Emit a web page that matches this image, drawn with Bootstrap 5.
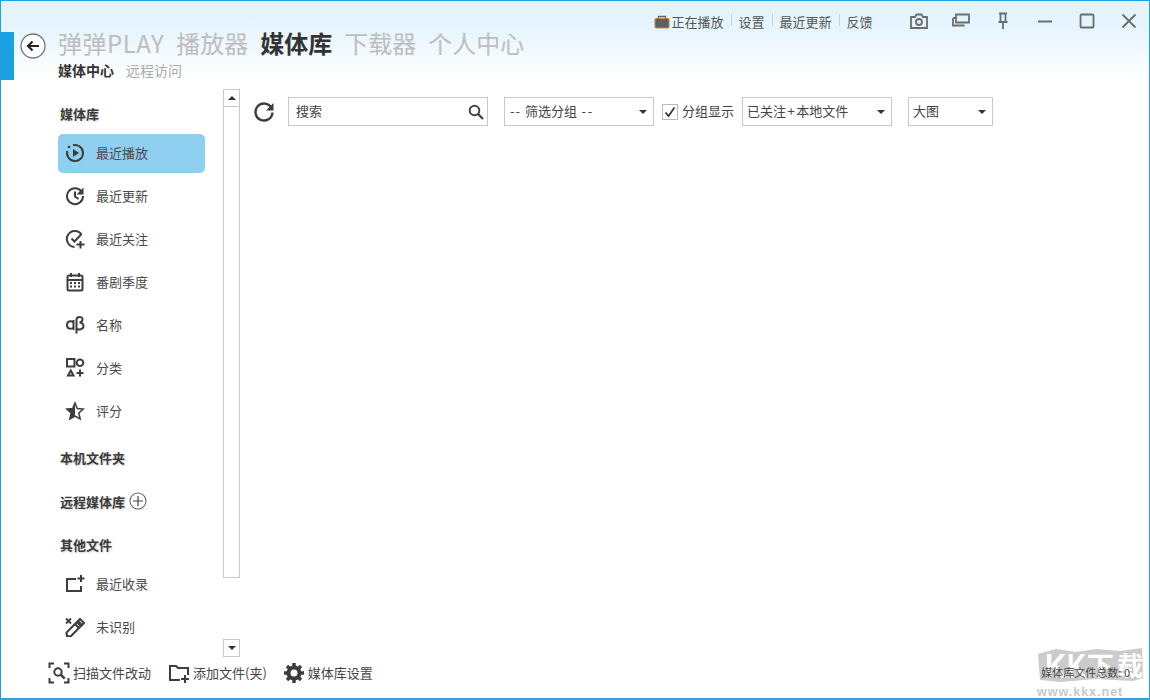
<!DOCTYPE html>
<html lang="zh">
<head>
<meta charset="utf-8">
<title>媒体库</title>
<link href="https://cdn.jsdelivr.net/npm/bootstrap@5.3.0/dist/css/bootstrap.min.css" rel="stylesheet">
<style>
html,body{height:100%;margin:0;overflow:hidden;background:#fff}
body{font-family:"Noto Sans CJK SC","Liberation Sans",sans-serif;font-size:13px;color:#444}
.app-win{position:relative;width:1150px;height:700px;border:1px solid #1ba1e2;border-bottom-width:2px;border-bottom-color:#3b9bd4;background:#fff;overflow:hidden}
.app-head{height:79px;background:linear-gradient(#e1f3fd 0,#e7f5fd 30px,#fff 76px)}
.tool-row{height:31px;padding-top:11px;padding-right:11px}
.tool-link{color:#555;font-size:13px;line-height:20px;padding:0 7.500px;position:relative}
.tool-link+.tool-link::before{content:"";position:absolute;left:0;top:2px;height:12px;border-left:1px solid #ccc}
.now-ico{width:16px;height:14px;margin-right:1px}
.win-btns{margin-left:30px;gap:24px}
.win-ico{width:18px;height:18px;display:block;fill:none;stroke:#6d6d6d;stroke-width:1.8}
.accent-block{width:13px;height:48px;background:#1ba1e2;flex:none}
.back-btn{width:26px;height:26px;margin:1px 12px 0 6px;flex:none}
.tab-main{font-size:24px;line-height:28px;color:#bdbdbd;margin-right:12px;white-space:nowrap}
.tab-latin{letter-spacing:.5px}
.tab-on{color:#333;font-weight:700}
.sub-on{font-weight:700;color:#333;font-size:14px;margin-right:12px;line-height:19px}
.sub-off{color:#aaa;font-size:14px;line-height:19px}
.title-col{margin-top:-3px}
.body-row{height:574px}
.side-col{width:222px;padding-left:57px;flex:none;overflow:hidden}
.sec-title{font-weight:700;font-size:13px;color:#3a3a3a;padding-left:2px;height:43px;line-height:41px;text-shadow:1px 1px 2px rgba(0,0,0,.18)}
.sec-first{height:54px;padding-top:15px;line-height:38px}
.sec-local{margin-top:6px}
.sec-remote{height:44px;padding-bottom:2px}
.sec-other{height:41px}
.nav-entry{width:147px;height:39px;margin-bottom:4px;padding-bottom:2px;border-radius:5px;display:flex;align-items:center;color:#4a4a4a;font-size:13px}
.nav-entry.is-on{background:#8fd0f1}
.nav-ico{width:20px;height:20px;margin:0 11px 0 7px;flex:none;fill:none;stroke:#3d3d3d;stroke-width:2}
.scroll-col{width:17px;flex:none;margin-top:9px;height:565px}
.scroll-btn{height:18px;border:1px solid #c8c8c8;background:#fff;display:flex;align-items:center;justify-content:center}
.scroll-thumb{height:471px;border:1px solid #c8c8c8;border-top:0;background:#fff}
.scroll-gap{height:61px}
.tri-up{width:0;height:0;border:4px solid transparent;border-top:0;border-bottom:4px solid #333}
.tri-down{width:0;height:0;border:4px solid transparent;border-bottom:0;border-top:4px solid #333}
.main-col{padding:17px 0 0 12px}
.filter-row{height:29px}
.refresh-ico{width:24px;height:24px;fill:none;stroke:#3d3d3d;stroke-width:2.4;margin-right:12px;flex:none}
.field-box{height:29px;border:1px solid #c8c8c8;background:#fff;display:flex;align-items:center;justify-content:space-between;color:#444;font-size:13px;flex:none}
.field-text{position:relative;top:-1px}
.dash-run{letter-spacing:1px}
.dash-tail{letter-spacing:1.700px}
.plus-run{padding:0 1.500px}
.f-search{width:200px;padding:0 3px 0 7px;margin-right:16px}
.f-group{width:150px;padding:0 6px 0 5px;margin-right:8px}
.f-follow{width:150px;padding:0 6px 0 4px;margin-right:16px}
.f-view{width:85px;padding:0 6px 0 4px}
.mini-search{width:16px;height:16px;fill:none;stroke:#444;stroke-width:2}
.check-wrap{display:flex;align-items:center;margin-right:8px;color:#444;white-space:nowrap}
.check-box{width:16px;height:16px;border:1px solid #bbb;display:flex;align-items:center;justify-content:center;margin-right:4px}
.foot-bar{height:38px;padding-left:47px}
.foot-item{display:flex;align-items:center;color:#444;font-size:13px;margin-right:17px;white-space:nowrap}
.foot-add{margin-right:16px}
.foot-ico{width:22px;height:22px;margin-right:3px;fill:none;stroke:#3d3d3d;stroke-width:2;flex:none}
.foot-count{position:absolute;right:19px;bottom:19px;font-size:11px;color:#444;z-index:2;line-height:14px}
.kk-mark{position:absolute;right:1px;bottom:0;width:116px;height:52px;z-index:1}
</style>
</head>
<body>
<div class="app-win d-flex flex-column">
  <header class="app-head flex-none">
    <div class="tool-row d-flex justify-content-end align-items-start">
      <div class="d-flex">
        <span class="tool-link d-flex align-items-center"><svg class="now-ico" viewBox="0 0 16 14"><rect x="1" y="3.500" width="14" height="9.500" rx="1" fill="#5f5f5f" stroke="#b58a50"/><path d="M4.500 3.500V1.500h7v2" fill="none" stroke="#666" stroke-width="1.300"/></svg>正在播放</span>
        <span class="tool-link">设置</span>
        <span class="tool-link">最近更新</span>
        <span class="tool-link">反馈</span>
      </div>
      <div class="d-flex win-btns">
        <svg class="win-ico" viewBox="0 0 18 18"><path d="M1 5h4l1.500-2.500h5L13 5h4v11H1z"/><circle cx="9" cy="10" r="3"/></svg>
        <svg class="win-ico" viewBox="0 0 18 18"><path d="M1 6v7.500h11.500M1 6h3"/><path d="M4 10.500V2.500h13v8z"/></svg>
        <svg class="win-ico" viewBox="0 0 18 18"><path d="M5 1.500h8M6.500 1.500v8M11.500 1.500v8M4.500 10h9M9 10v7"/></svg>
        <svg class="win-ico" viewBox="0 0 18 18"><path d="M2 9.500h14" stroke-width="2"/></svg>
        <svg class="win-ico" viewBox="0 0 18 18"><rect x="2.500" y="2.500" width="13" height="13" rx="1"/></svg>
        <svg class="win-ico" viewBox="0 0 18 18"><path d="M2.500 2.500l13 13M15.500 2.500l-13 13"/></svg>
      </div>
    </div>
    <div class="d-flex align-items-start">
      <div class="accent-block"></div>
      <svg class="back-btn" viewBox="0 0 26 26"><circle cx="13" cy="13" r="12" fill="#fff" stroke="#777" stroke-width="1.300"/><path d="M19 13H8M12.500 8.500L8 13l4.500 4.500" fill="none" stroke="#222" stroke-width="2.200"/></svg>
      <div class="title-col">
        <div class="d-flex">
          <span class="tab-main tab-latin">弹弹PLAY</span><span class="tab-main">播放器</span><span class="tab-main tab-on">媒体库</span><span class="tab-main">下载器</span><span class="tab-main">个人中心</span>
        </div>
        <div class="d-flex mt-1"><span class="sub-on">媒体中心</span><span class="sub-off">远程访问</span></div>
      </div>
    </div>
  </header>
  <div class="body-row d-flex">
    <aside class="side-col">
      <div class="sec-title sec-first">媒体库</div>
      <div class="nav-entry is-on"><svg class="nav-ico" viewBox="0 0 20 20"><path d="M8 2.300A8 8 0 1 1 2.300 8"/><circle cx="4" cy="4" r="1.300" fill="#3d3d3d" stroke="none"/><path d="M8 6l6 4-6 4z" fill="#3d3d3d" stroke="none"/></svg>最近播放</div>
      <div class="nav-entry"><svg class="nav-ico" viewBox="0 0 20 20"><path d="M16.500 5.500A8 8 0 1 0 18 10"/><path d="M18.500 1.500v7h-7z" fill="#3d3d3d" stroke="none"/><path d="M10 5.500v5l3.500 2.500"/></svg>最近更新</div>
      <div class="nav-entry"><svg class="nav-ico" viewBox="0 0 20 20"><path d="M16.500 5.500A8 8 0 1 0 9.500 18"/><path d="M6.500 9.500l3 3 7-7.500M15.500 12v7.500M11.500 15.500h8"/></svg>最近关注</div>
      <div class="nav-entry"><svg class="nav-ico" viewBox="0 0 20 20"><rect x="2.500" y="3.500" width="15" height="15" rx="1.500"/><path d="M2.500 8h15M6 1v4M14 1v4"/><path d="M5 11h2M9 11h2M13 11h2M5 14.500h2M9 14.500h2M13 14.500h2"/></svg>番剧季度</div>
      <div class="nav-entry"><svg class="nav-ico" viewBox="0 0 20 20"><path d="M8.500 5v10M8.500 8C7.500 5.500 2 5 2 10s5.500 4.500 6.500 2"/><path d="M11.500 18.500V5c0-4 6-4 6-.5 0 2.500-3 3-3 3s4 0 4 3.500-5 4.500-7 2.500"/></svg>名称</div>
      <div class="nav-entry"><svg class="nav-ico" viewBox="0 0 20 20"><rect x="2" y="1" width="7.500" height="7.500"/><circle cx="15" cy="4.800" r="3.300"/><path d="M5.800 12.500l2.700 5H3zM15 11.500v7M11.500 15h7"/></svg>分类</div>
      <div class="nav-entry"><svg class="nav-ico" viewBox="0 0 20 20"><path d="M10 2l2.300 5.500 6 .5-4.500 4 1.400 6L10 15l-5.200 3 1.400-6-4.500-4 6-.5z" stroke-width="1.500"/><path d="M10 2v13l-5.200 3 1.400-6-4.500-4 6-.5z" fill="#3d3d3d" stroke="none"/></svg>评分</div>
      <div class="sec-title sec-local">本机文件夹</div>
      <div class="sec-title sec-remote d-flex align-items-center">远程媒体库<svg class="ms-1" width="18" height="18" viewBox="0 0 18 18"><circle cx="9" cy="9" r="8" fill="none" stroke="#666" stroke-width="1.100"/><path d="M9 4v10M4 9h10" stroke="#444" stroke-width="1.200"/></svg></div>
      <div class="sec-title sec-other">其他文件</div>
      <div class="nav-entry"><svg class="nav-ico" viewBox="0 0 20 20"><path d="M11 5H2v12h14v-5"/><path d="M16 1v7M12.500 4.500h7"/></svg>最近收录</div>
      <div class="nav-entry"><svg class="nav-ico" viewBox="0 0 20 20"><path d="M2 19l-.5-3.500L12 5l4 4L5.500 19.500zM10 7l4 4M15 2l4 4-2 2-4-4z"/><path d="M1 1.500l5 5M6 1.500l-5 5" stroke-width="1.800"/></svg>未识别</div>
    </aside>
    <div class="scroll-col">
      <div class="scroll-btn"><span class="tri-up"></span></div>
      <div class="scroll-thumb"></div>
      <div class="scroll-gap"></div>
      <div class="scroll-btn"><span class="tri-down"></span></div>
    </div>
    <main class="main-col flex-grow-1">
      <div class="filter-row d-flex align-items-center">
        <svg class="refresh-ico" viewBox="0 0 24 24"><path d="M19.500 8A8.500 8.500 0 1 0 20.500 12.500"/><path d="M21.500 3v7.500H14z" fill="#3d3d3d" stroke="none"/></svg>
        <div class="field-box f-search"><span class="field-text">搜索</span><svg class="mini-search" viewBox="0 0 16 16"><circle cx="6.500" cy="6.500" r="4.800"/><path d="M10 10l5 5" stroke-width="2.400"/></svg></div>
        <div class="field-box f-group"><span class="field-text"><span class="dash-run">-- </span>筛选分组<span class="dash-tail"> --</span></span><span class="tri-down"></span></div>
        <label class="check-wrap"><span class="check-box"><svg width="12" height="12" viewBox="0 0 12 12"><path d="M1.500 6.500l3 3.500 6-8.500" fill="none" stroke="#333" stroke-width="1.700"/></svg></span><span class="field-text">分组显示</span></label>
        <div class="field-box f-follow"><span class="field-text">已关注<span class="plus-run">+</span>本地文件</span><span class="tri-down"></span></div>
        <div class="field-box f-view"><span class="field-text">大图</span><span class="tri-down"></span></div>
      </div>
    </main>
  </div>
  <footer class="foot-bar d-flex align-items-center">
    <span class="foot-item"><svg class="foot-ico" viewBox="0 0 22 22"><path d="M1.500 6V1.500H6M16 1.500h4.500V6M20.500 16v4.500H16M6 20.500H1.500V16"/><circle cx="10" cy="10" r="3.700"/><path d="M12.700 12.700l4 4" stroke-width="2.400"/></svg>扫描文件改动</span>
    <span class="foot-item foot-add"><svg class="foot-ico" viewBox="0 0 22 22"><path d="M12 18H2V4h6l2 2h10v7"/><path d="M17 13v8M13 17h8"/></svg>添加文件(夹)</span>
    <span class="foot-item"><svg class="foot-ico" viewBox="0 0 22 22"><circle cx="11" cy="11" r="5.500" stroke-width="4"/><path d="M11 1v4M11 17v4M1 11h4M17 11h4M4 4l3 3M15 15l3 3M18 4l-3 3M7 15l-3 3" stroke-width="3.400"/></svg>媒体库设置</span>
  </footer>
  <svg class="kk-mark" viewBox="0 0 116 52">
    <path d="M6 8l18-5 20 3 20-3 24 2 22-3 1 30-10 3-38-2-34 3-21-2z" fill="#cbcbcb"/>
    <text transform="translate(13 32) scale(.84 1)" font-family="Liberation Sans" font-size="35" font-weight="700" fill="#fff">K</text>
    <text transform="translate(35 32) scale(.76 1)" font-family="Liberation Sans" font-size="35" font-weight="700" fill="#fff">K</text>
    <text x="55" y="30" font-family="Noto Sans CJK SC" font-size="27" font-weight="700" fill="#fff">下</text>
    <text x="85" y="30" font-family="Noto Sans CJK SC" font-size="26" font-weight="700" fill="#fff">载</text>
    <text x="5" y="50" font-family="Liberation Sans" font-size="12.500" font-weight="700" letter-spacing="1" fill="#c8c8c8">www.kkx.net</text>
  </svg>
  <div class="foot-count">媒体库文件总数: 0</div>
</div>
<script src="https://cdn.jsdelivr.net/npm/bootstrap@5.3.0/dist/js/bootstrap.bundle.min.js"></script>
</body>
</html>
